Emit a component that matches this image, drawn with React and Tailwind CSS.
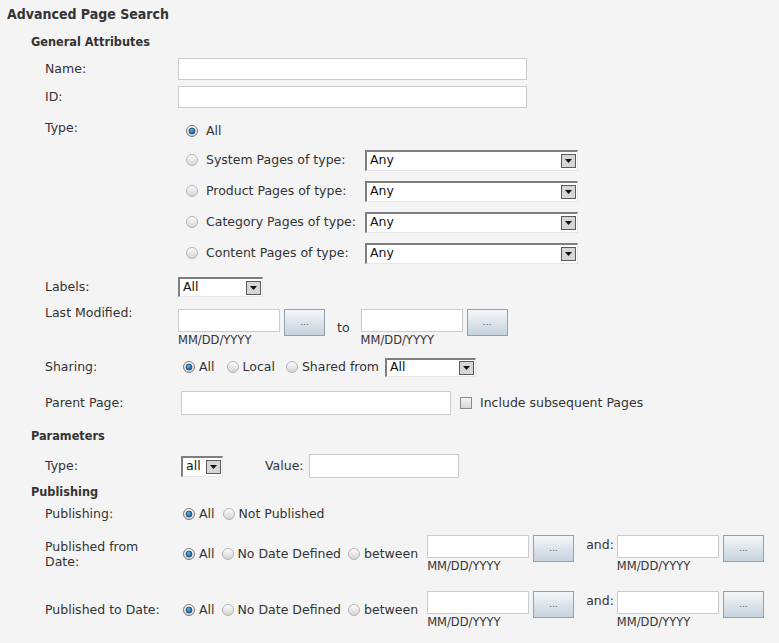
import React from 'react';

const Radio = ({ checked }) => (
  <svg width="12" height="12" viewBox="0 0 12 12" className="shrink-0">
    <circle cx="6" cy="6" r="5.5" fill="url(#radioBg)" stroke={checked ? '#7d7d7d' : '#b4b4b4'} />
    {checked && <circle cx="6" cy="6" r="3" fill="url(#radioDot)" stroke="#0f3d5e" strokeWidth="0.7" />}
  </svg>
);

const Arrow = () => (
  <div className="flex items-center justify-center w-[15px] h-[14px] mr-[1px] border border-[#5a5a5a] bg-[#d6d6d6] shrink-0">
    <svg width="7" height="4" viewBox="0 0 7 4">
      <path d="M0 0 L7 0 L3.5 4 Z" fill="#111" />
    </svg>
  </div>
);

const Select = ({ value, className }) => (
  <div className={'flex items-center bg-white border-t-2 border-l-2 border-r border-b border-t-[#7e7e7e] border-l-[#7e7e7e] border-r-[#e6e6e6] border-b-[#e6e6e6] ' + className}>
    <span className="flex-1 pl-[3px] text-[#111] leading-none">{value}</span>
    <Arrow />
  </div>
);

const DotsButton = () => (
  <button className="w-[41px] h-[27px] border border-[#8ea2b3] bg-gradient-to-b from-[#f4f7fa] to-[#c6d2dc] text-[9px] text-[#555] leading-none shrink-0">
    ...
  </button>
);

const DateGroup = () => (
  <div className="flex items-start gap-[4px]">
    <div className="flex flex-col">
      <input className="w-[102px] h-[23px] bg-white border border-[#cccccc]" />
      <span className="mt-[2px] text-[11.5px] leading-[12px] text-[#333]">MM/DD/YYYY</span>
    </div>
    <DotsButton />
  </div>
);

const Label = ({ children }) => <div className="w-[178px] pl-[45px] shrink-0">{children}</div>;

const Header = ({ children, className }) => (
  <div className={"pl-[31px] font-['DejaVu_Sans_Condensed',sans-serif] font-bold text-[12.6px] leading-[16px] " + className}>
    {children}
  </div>
);

const typeRows = ['System Pages of type:', 'Product Pages of type:', 'Category Pages of type:', 'Content Pages of type:'];

const DateRow = ({ label, className }) => (
  <div className={'flex items-center ' + className}>
    <div className="w-[178px] pl-[45px] shrink-0 leading-[15px]">{label}</div>
    <div className="flex items-center pl-[5px]">
      <Radio checked />
      <span className="ml-[4px]">All</span>
      <span className="ml-[7px]"><Radio /></span>
      <span className="ml-[4px]">No Date Defined</span>
      <span className="ml-[7px]"><Radio /></span>
      <span className="ml-[4px]">between</span>
      <div className="ml-[9px] flex items-start">
        <DateGroup />
        <span className="ml-[12px] mt-[2px]">and:</span>
        <div className="ml-[3px]">
          <DateGroup />
        </div>
      </div>
    </div>
  </div>
);

export default function App() {
  return (
    <div className="w-[779px] h-[643px] overflow-hidden bg-[#f4f4f4] text-[#333] text-[12.5px] leading-[16px] font-['DejaVu_Sans',sans-serif]">
      <svg width="0" height="0" className="absolute">
        <defs>
          <linearGradient id="radioBg" x1="0" y1="0" x2="0" y2="1">
            <stop offset="0" stopColor="#ffffff" />
            <stop offset="1" stopColor="#d2d2d2" />
          </linearGradient>
          <radialGradient id="radioDot" cx="0.4" cy="0.35" r="0.7">
            <stop offset="0" stopColor="#5fb0e6" />
            <stop offset="1" stopColor="#135a8c" />
          </radialGradient>
        </defs>
      </svg>

      <div className="pt-[6px] pl-[7px] font-['DejaVu_Sans_Condensed',sans-serif] font-bold text-[14px] leading-[16px]">
        Advanced Page Search
      </div>

      <Header className="mt-[12px]">General Attributes</Header>

      <div className="mt-[8px] h-[22px] flex items-center">
        <Label>Name:</Label>
        <input className="w-[349px] h-[22px] bg-white border border-[#cccccc]" />
      </div>
      <div className="mt-[6px] h-[22px] flex items-center">
        <Label>ID:</Label>
        <input className="w-[349px] h-[22px] bg-white border border-[#cccccc]" />
      </div>

      <div className="mt-[12px] flex">
        <Label>Type:</Label>
        <div className="flex flex-col pl-[8px]">
          <div className="h-[22px] flex items-center">
            <Radio checked />
            <span className="ml-[8px]">All</span>
          </div>
          {typeRows.map((t, i) => (
            <div key={t} className={(i === 0 ? 'mt-[7px]' : 'mt-[9px]') + ' h-[22px] flex items-center'}>
              <Radio />
              <span className="ml-[8px] w-[159px]">{t}</span>
              <Select value="Any" className="w-[213px] h-[21px]" />
            </div>
          ))}
        </div>
      </div>

      <div className="mt-[13px] h-[20px] flex items-center">
        <Label>Labels:</Label>
        <Select value="All" className="w-[85px] h-[20px]" />
      </div>

      <div className="mt-[8px] flex items-start">
        <Label>Last Modified:</Label>
        <div className="pt-[4px] flex items-center">
          <DateGroup />
          <span className="ml-[12px]">to</span>
          <div className="ml-[11px]">
            <DateGroup />
          </div>
        </div>
      </div>

      <div className="mt-[11px] h-[20px] flex items-center">
        <Label>Sharing:</Label>
        <div className="flex items-center pl-[5px]">
          <Radio checked />
          <span className="ml-[4px]">All</span>
          <span className="ml-[12px]"><Radio /></span>
          <span className="ml-[4px]">Local</span>
          <span className="ml-[11px]"><Radio /></span>
          <span className="ml-[4px]">Shared from</span>
          <Select value="All" className="ml-[6px] w-[91px] h-[19px]" />
        </div>
      </div>

      <div className="mt-[14px] h-[24px] flex items-center">
        <Label>Parent Page:</Label>
        <input className="ml-[3px] w-[270px] h-[24px] bg-white border border-[#cccccc]" />
        <div className="ml-[9px] w-[12px] h-[12px] border border-[#8a8a8a] bg-gradient-to-b from-[#f2f2f2] to-[#d8d8d8] shrink-0" />
        <span className="ml-[8px]">Include subsequent Pages</span>
      </div>

      <Header className="mt-[13px]">Parameters</Header>

      <div className="mt-[10px] h-[24px] flex items-center">
        <Label>Type:</Label>
        <Select value="all" className="ml-[3px] w-[42px] h-[21px]" />
        <span className="ml-[42px]">Value:</span>
        <input className="ml-[5px] w-[150px] h-[24px] bg-white border border-[#cccccc]" />
      </div>

      <Header className="mt-[6px]">Publishing</Header>

      <div className="mt-[5px] h-[18px] flex items-center">
        <Label>Publishing:</Label>
        <div className="flex items-center pl-[5px]">
          <Radio checked />
          <span className="ml-[4px]">All</span>
          <span className="ml-[8px]"><Radio /></span>
          <span className="ml-[4px]">Not Published</span>
        </div>
      </div>

      <DateRow
        className="mt-[12px]"
        label={
          <>
            Published from
            <br />
            Date:
          </>
        }
      />
      <DateRow className="mt-[19px]" label="Published to Date:" />
    </div>
  );
}
